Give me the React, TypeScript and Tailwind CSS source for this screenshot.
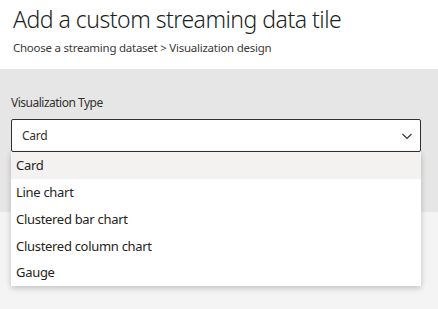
import React from 'react';

const options = ['Card', 'Line chart', 'Clustered bar chart', 'Clustered column chart', 'Gauge'];

const App: React.FC = () => {
  return (
    <div
      className="w-[438px] h-[309px] flex flex-col overflow-hidden bg-[#f4f4f4] text-[#252423]"
      style={{ fontFamily: '"Noto Sans", "Open Sans", sans-serif' }}
    >
      {/* Header */}
      <div className="h-[69px] bg-white px-[13px] pt-[4px] shrink-0">
        <h1 className="text-[23px] leading-[30px] font-light tracking-[-0.5px] text-[#201f1e]">
          Add a custom streaming data tile
        </h1>
        <div className="text-[11.5px] leading-[16px] mt-[6px] tracking-[-0.25px] text-[#3b3a39]">
          Choose a streaming dataset &gt; Visualization design
        </div>
      </div>

      {/* Form band */}
      <div className="h-[143px] bg-[#e6e6e6] px-[11px] pt-[26px] shrink-0 relative">
        <div className="text-[12px] leading-[16px] tracking-[-0.5px] text-[#323130]">Visualization Type</div>
        <div className="relative mt-[8px]">
          <div className="h-[33px] w-[410px] bg-white border border-[#323130] rounded-[2px] flex items-center justify-between pl-[10px] pr-[7px]">
            <span className="text-[12px] tracking-[-0.3px] text-[#323130]">Card</span>
            <svg width="12" height="12" viewBox="0 0 12 12" fill="none">
              <path d="M1.5 4 L6 8.5 L10.5 4" stroke="#323130" strokeWidth="1.1" />
            </svg>
          </div>

          {/* Dropdown list */}
          <div className="absolute left-0 top-[33px] w-[410px] bg-white shadow-[0_2px_6px_rgba(0,0,0,0.22)] z-10">
            {options.map((opt, i) => (
              <div
                key={opt}
                className={`h-[26.8px] flex items-center pl-[5px] pt-[1px] text-[13px] tracking-[-0.3px] text-[#252423] ${
                  i === 0 ? 'bg-[#f3f2f1]' : ''
                }`}
              >
                {opt}
              </div>
            ))}
          </div>
        </div>
      </div>

      <div className="flex-1 bg-[#f4f4f4]" />
    </div>
  );
};

export default App;
